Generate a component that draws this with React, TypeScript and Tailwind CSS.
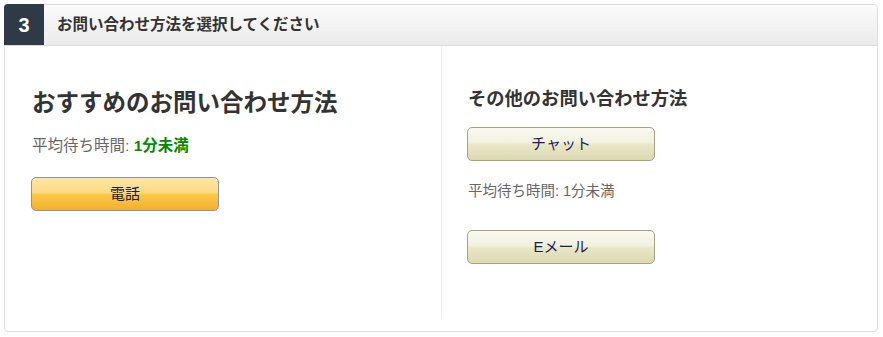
import React from "react";

const font = { fontFamily: '"Liberation Sans", "Noto Sans CJK JP", sans-serif' };

const Button = ({ label, variant }: { label: string; variant: "primary" | "secondary" }) => {
  const cls =
    variant === "primary"
      ? "bg-[linear-gradient(to_bottom,#ffe6a3_0%,#fedb84_45%,#fdc847_52%,#f1b02d_100%)] border-[#8a94a9]"
      : "bg-[linear-gradient(to_bottom,#f9f9f0_0%,#f2f1e0_45%,#e9e7c8_52%,#dcd8b1_100%)] border-[#a6a283]";
  return (
    <button
      className={`-ml-px w-[188px] h-[34px] rounded-[5px] border text-[15px] text-[#1d1d55] ${cls}`}
    >
      {label}
    </button>
  );
};

const App = () => {
  return (
    <div className="p-[4px] bg-white" style={font}>
      <div className="w-[874px] h-[328px] border border-[#dddddd] rounded-[4px] flex flex-col">
        <div className="h-[41px] flex items-stretch bg-gradient-to-b from-[#fbfbfb] to-[#ebebeb] border-b border-[#dcdcdc] rounded-t-[4px]">
          <div className="w-[40px] -ml-px -mt-px bg-[#2e3a45] rounded-tl-[4px] flex items-center justify-center text-white font-bold text-[20px]">
            3
          </div>
          <div className="pl-[13px] flex items-center text-[15.5px] font-bold text-[#333]">
            お問い合わせ方法を選択してください
          </div>
        </div>
        <div className="flex flex-1 pb-[13px]">
          <div className="w-[436px] pl-[27px] pt-[42px]">
            <h2 className="text-[23.5px] font-bold text-[#333] leading-[30px]">おすすめのお問い合わせ方法</h2>
            <p className="mt-[18px] text-[15.5px] text-[#666] leading-[20px]">
              平均待ち時間: <span className="font-bold text-[#008a00]">1分未満</span>
            </p>
            <div className="mt-[21px]">
              <Button label="電話" variant="primary" />
            </div>
          </div>
          <div className="flex-1 border-l border-[#eeeeee] pl-[26px] pt-[41px]">
            <h3 className="text-[18.3px] font-bold text-[#333] leading-[24px]">その他のお問い合わせ方法</h3>
            <div className="mt-[16px]">
              <Button label="チャット" variant="secondary" />
            </div>
            <p className="mt-[20px] text-[14.5px] text-[#666] leading-[20px]">平均待ち時間: 1分未満</p>
            <div className="mt-[29px]">
              <Button label="Eメール" variant="secondary" />
            </div>
          </div>
        </div>
      </div>
    </div>
  );
};

export default App;
